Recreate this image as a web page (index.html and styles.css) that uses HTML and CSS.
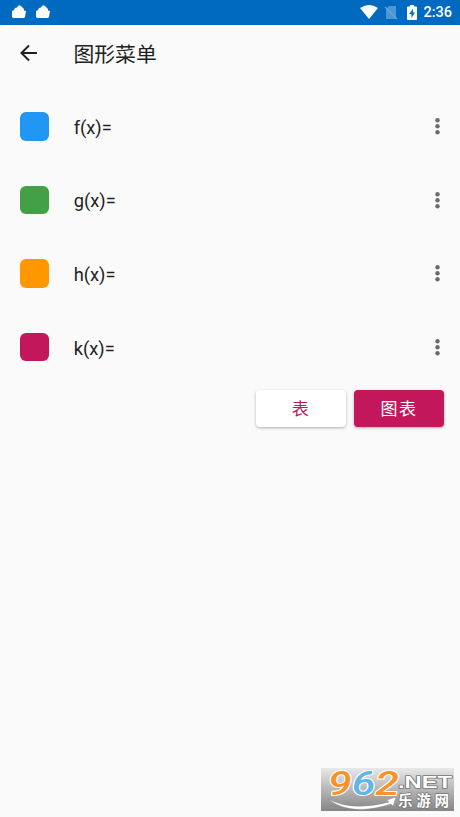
FILE: index.html
```html
<!DOCTYPE html>
<html lang="zh-CN">
<head>
  <meta charset="UTF-8">
  <meta name="viewport" content="width=device-width, initial-scale=1">
  <title>图形菜单</title>
  <link rel="stylesheet" href="styles.css">
</head>
<body>

  <div class="statusbar">
    <svg class="notif" viewBox="0 0 14 14"><path d="M0 6L2 5L3 3L5 2.5L7 0L9 1L12 4L12 5.5L14 6L13 12L12 13H1L0 12Z"/></svg>
    <svg class="notif" viewBox="0 0 14 14"><path d="M0 6L2 5L3 3L5 2.5L7 0L9 1L12 4L12 5.5L14 6L13 12L12 13H1L0 12Z"/></svg>
    <div class="system">
      <svg class="wifi" viewBox="0 0 18 14"><path d="M0 3Q9 -3 18 3L9 14Z"/></svg>
      <svg class="sim" viewBox="0 0 14 15"><path d="M5 1H12V14H2V4Z" opacity=".3"/><path d="M1 2L13 14" stroke="#69a6dc" stroke-width="1.2"/></svg>
      <svg class="battery" viewBox="0 0 10 15"><path d="M3 0H7V1.5H9Q10 1.5 10 2.5V14Q10 15 9 15H1Q0 15 0 14V2.5Q0 1.5 1 1.5H3Z"/><path d="M6 3.5L2.2 9H4.5V13L8 7.5H5.8Z" fill="#0069c0"/></svg>
      <span class="clock">2:36</span>
    </div>
  </div>

  <div class="toolbar">
    <svg class="back" viewBox="0 0 18 18"><path d="M17 9H2M9 1.5L1.5 9L9 16.5"/></svg>
    <h1>图形菜单</h1>
  </div>

  <div class="functions">
    <div class="row">
      <div class="swatch blue"></div>
      <span class="name">f(x)=</span>
      <svg class="more" viewBox="0 0 6 18"><circle cx="2.5" cy="3.2" r="2.2"/><circle cx="2.5" cy="9.2" r="2.2"/><circle cx="2.5" cy="15.2" r="2.2"/></svg>
    </div>
    <div class="row">
      <div class="swatch green"></div>
      <span class="name">g(x)=</span>
      <svg class="more" viewBox="0 0 6 18"><circle cx="2.5" cy="3.2" r="2.2"/><circle cx="2.5" cy="9.2" r="2.2"/><circle cx="2.5" cy="15.2" r="2.2"/></svg>
    </div>
    <div class="row">
      <div class="swatch orange"></div>
      <span class="name">h(x)=</span>
      <svg class="more" viewBox="0 0 6 18"><circle cx="2.5" cy="3.2" r="2.2"/><circle cx="2.5" cy="9.2" r="2.2"/><circle cx="2.5" cy="15.2" r="2.2"/></svg>
    </div>
    <div class="row">
      <div class="swatch pink"></div>
      <span class="name">k(x)=</span>
      <svg class="more" viewBox="0 0 6 18"><circle cx="2.5" cy="3.2" r="2.2"/><circle cx="2.5" cy="9.2" r="2.2"/><circle cx="2.5" cy="15.2" r="2.2"/></svg>
    </div>
  </div>

  <div class="actions">
    <button>表</button>
    <button class="primary">图表</button>
  </div>

  <svg class="watermark" viewBox="0 0 133 43">
    <path class="swoosh" d="M7 31Q32 44 68 34L66 32L75 29L72 38L70 36Q30 49 7 31Z"/>
    <text class="digits" x="7" y="26.5" textLength="71" lengthAdjust="spacingAndGlyphs"><tspan fill="#f7922d">9</tspan><tspan fill="#62b5e8">6</tspan><tspan fill="#f7922d">2</tspan></text>
    <text class="net" x="77" y="20" textLength="54" lengthAdjust="spacingAndGlyphs">.NET</text>
    <text class="site" x="77" y="38" textLength="51">乐游网</text>
  </svg>

</body>
</html>
```

FILE: styles.css
```css
body {
  margin: 0;
  min-height: 817px;
  position: relative;
  background-color: #fafafa;
  color: #212121;
  font-family: Roboto, "Noto Sans CJK SC", sans-serif;
}
.statusbar {
  display: flex;
  align-items: center;
  gap: 10px;
  height: 24.5px;
  padding: 0 8px 0 12px;
  background-color: #0069c0;
  color: #fff;
  fill: #fff;
}
.notif {
  width: 14px;
  height: 14px;
}
.system {
  display: flex;
  align-items: center;
  margin-left: auto;
}
.wifi {
  width: 18px;
  height: 14px;
}
.sim {
  width: 14px;
  height: 15px;
  margin-left: 6px;
}
.battery {
  width: 10px;
  height: 15px;
  margin-left: 9px;
}
.clock {
  margin-left: 6px;
  padding-top: 2px;
  font-size: 14.5px;
  font-weight: 500;
  line-height: 24px;
}
.toolbar {
  display: flex;
  align-items: center;
  height: 57px;
  padding-left: 20px;
}
.back {
  width: 18px;
  height: 18px;
  fill: none;
  stroke: #212121;
  stroke-width: 2;
}
h1 {
  margin: 0 0 0 35.5px;
  font-size: 20.8px;
  font-weight: 400;
  font-family: "Noto Sans CJK SC", sans-serif;
  line-height: 30px;
}
.functions {
  padding: 8px 19.5px 0 20.3px;
}
.row {
  display: flex;
  align-items: center;
  height: 73.6px;
}
.swatch {
  width: 28.7px;
  height: 28.7px;
  border-radius: 6px;
}
.blue {
  background-color: #2196f3;
}
.green {
  background-color: #43a047;
}
.orange {
  background-color: #ff9800;
}
.pink {
  background-color: #c2185b;
}
.name {
  margin-left: 24.7px;
  padding-top: 2px;
  font-size: 18.3px;
}
.more {
  width: 6px;
  height: 18px;
  margin-left: auto;
  fill: #6b6b6b;
}
.actions {
  display: flex;
  justify-content: flex-end;
  gap: 8px;
  padding: 6px 16px 0 0;
}
button {
  width: 90px;
  height: 37px;
  padding: 0 0 2px;
  border: none;
  border-radius: 4px;
  background-color: #fff;
  color: #c2185b;
  font: 400 17px Roboto, "Noto Sans CJK SC", sans-serif;
  letter-spacing: 1.5px;
  box-shadow: 0 1px 3px rgba(0, 0, 0, 0.3);
}
.primary {
  background-color: #c2185b;
  color: #fff;
}
.watermark {
  position: absolute;
  right: 6px;
  bottom: 6px;
  width: 133px;
  height: 43px;
  overflow: visible;
  background: linear-gradient(#e8e8e8, #858585);
}
.watermark text {
  paint-order: stroke;
  stroke-linejoin: round;
}
.swoosh {
  fill: #fff;
  stroke: #888;
  stroke-width: 0.4;
}
.digits {
  font: italic 500 33px Roboto, sans-serif;
  stroke: #fff;
  stroke-width: 2;
}
.net {
  font: 700 17px "Liberation Sans", sans-serif;
  fill: #fff;
  stroke: #777;
  stroke-width: 1.5;
}
.site {
  font: 700 14.5px "Noto Sans CJK SC", sans-serif;
  fill: #fff;
  stroke: #777;
  stroke-width: 1.5;
}
```
